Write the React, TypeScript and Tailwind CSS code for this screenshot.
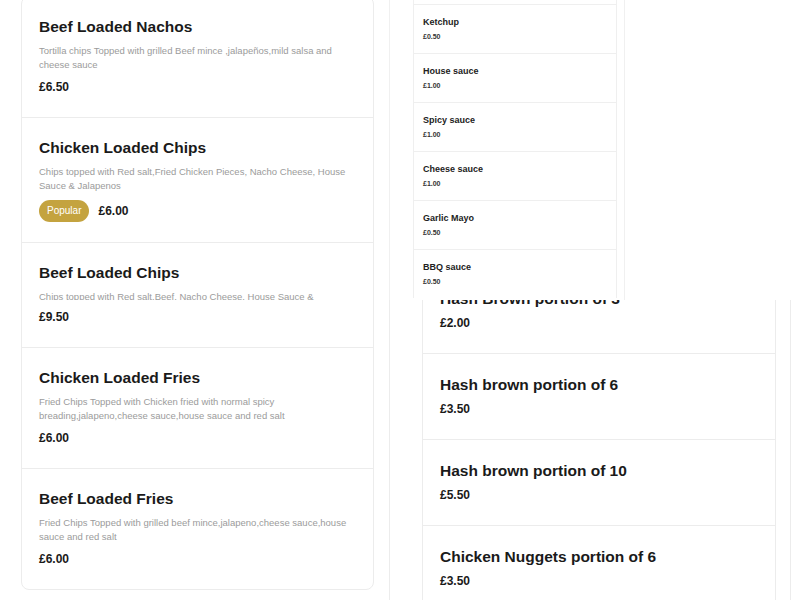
import React from "react";

type Dish = { name: string; desc?: string; price: string; popular?: boolean };

const LOADED: Dish[] = [
  {
    name: "Beef Loaded Nachos",
    desc: "Tortilla chips Topped with grilled Beef mince ,jalapeños,mild salsa and cheese sauce",
    price: "£6.50",
  },
  {
    name: "Chicken Loaded Chips",
    desc: "Chips topped with Red salt,Fried Chicken Pieces, Nacho Cheese, House Sauce & Jalapenos",
    price: "£6.00",
    popular: true,
  },
  {
    name: "Beef Loaded Chips",
    desc: "Chips topped with Red salt,Beef, Nacho Cheese, House Sauce & Jalapenos",
    price: "£9.50",
  },
  {
    name: "Chicken Loaded Fries",
    desc: "Fried Chips Topped with Chicken fried with normal spicy breading,jalapeno,cheese sauce,house sauce and red salt",
    price: "£6.00",
  },
  {
    name: "Beef Loaded Fries",
    desc: "Fried Chips Topped with grilled beef mince,jalapeno,cheese sauce,house sauce and red salt",
    price: "£6.00",
  },
];

const SAUCES = [
  { name: "Ketchup", price: "£0.50" },
  { name: "House sauce", price: "£1.00" },
  { name: "Spicy sauce", price: "£1.00" },
  { name: "Cheese sauce", price: "£1.00" },
  { name: "Garlic Mayo", price: "£0.50" },
  { name: "BBQ sauce", price: "£0.50" },
];

const SIDES = [
  { name: "Hash Brown portion of 3", price: "£2.00" },
  { name: "Hash brown portion of 6", price: "£3.50" },
  { name: "Hash brown portion of 10", price: "£5.50" },
  { name: "Chicken Nuggets portion of 6", price: "£3.50" },
];

function DishRow({ dish }: { dish: Dish }) {
  return (
    <div
      className={
        "border-t border-[#ececec] first:border-t-0 pt-[18px] px-[17px] " +
        (dish.popular ? "pb-[20px]" : "pb-[22px]")
      }
    >
      <div className="text-[15.5px] font-bold leading-[24px] text-[#1a1a1a]">{dish.name}</div>
      {dish.desc && (
        <p className="mt-[5px] text-[9.5px] leading-[14px] text-[#9b9b9b]">{dish.desc}</p>
      )}
      <div className="mt-[7px] flex items-center gap-[9px]">
        {dish.popular && (
          <span className="h-[22px] px-[8px] rounded-full bg-[#c4a33f] text-white text-[10px] leading-[22px]">
            Popular
          </span>
        )}
        <span className="text-[12px] font-bold leading-[16px] text-[#1a1a1a]">{dish.price}</span>
      </div>
    </div>
  );
}

function DishColumn({ items, offset }: { items: Dish[]; offset: string }) {
  return (
    <div className={"w-[389px] shrink-0 pl-[21px] pr-[15px] " + offset}>
      <div className="border border-[#ececec] rounded-[8px] bg-white">
        {items.map((d) => (
          <DishRow key={d.name} dish={d} />
        ))}
      </div>
    </div>
  );
}

export default function App() {
  return (
    <div
      className="w-[800px] h-[600px] overflow-hidden bg-white text-[#1a1a1a]"
      style={{ fontFamily: '"Liberation Sans", Arial, sans-serif' }}
    >
      {/* upper half */}
      <div className="h-[300px] flex overflow-hidden">
        <DishColumn items={LOADED.slice(0, 3)} offset="mt-[-4px]" />
        <div className="w-[236px] shrink-0 h-full border-l border-r border-[#f0f0f0] pl-[23px] pr-[7px]">
          <div className="h-[4px] border-l border-r border-[#f0f0f0]" />
          {SAUCES.map((s) => (
            <div
              key={s.name}
              className="border border-b-0 border-[#efefef] pl-[9px] pt-[11px] pb-[11px] h-[49px]"
            >
              <div className="text-[9px] font-bold leading-[12px] text-[#222]">{s.name}</div>
              <div className="mt-[4px] text-[7px] font-bold leading-[10px] text-[#333]">{s.price}</div>
            </div>
          ))}
        </div>
        <div className="flex-1" />
      </div>

      {/* lower half */}
      <div className="h-[300px] flex overflow-hidden">
        <DishColumn items={LOADED.slice(2)} offset="mt-[-74px]" />
        <div className="w-[402px] shrink-0 h-[340px] border-l border-r border-[#ececec] pl-[32px] pr-[14px] mt-[-33px]">
          <div className="border-l border-r border-[#ececec]">
            {SIDES.map((s) => (
              <div key={s.name} className="border-t border-[#ececec] pl-[17px] pt-[19px] pb-[22px]">
                <div className="text-[15.5px] font-bold leading-[24px] text-[#1a1a1a]">{s.name}</div>
                <div className="mt-[4px] text-[12px] font-bold leading-[16px] text-[#1a1a1a]">{s.price}</div>
              </div>
            ))}
          </div>
        </div>
      </div>
    </div>
  );
}
